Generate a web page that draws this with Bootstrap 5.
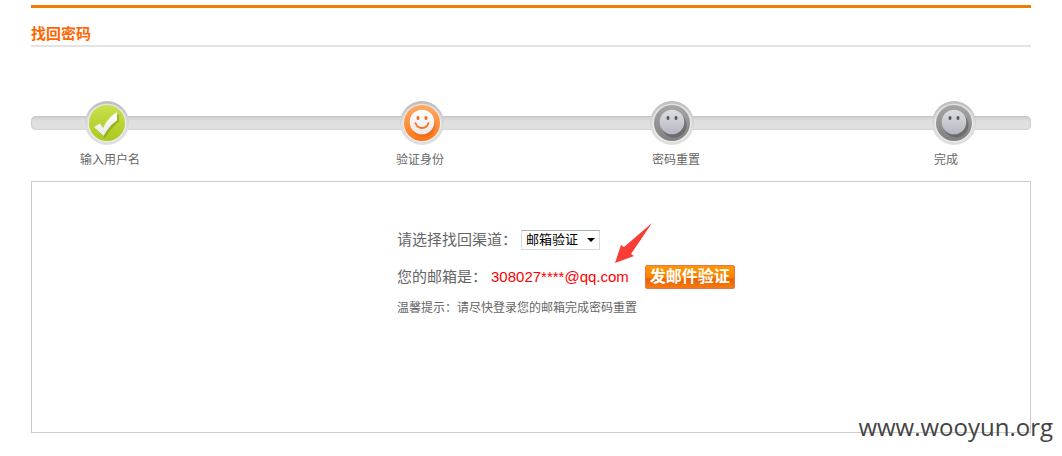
<!DOCTYPE html>
<html lang="zh-CN">
<head>
<meta charset="utf-8">
<meta name="viewport" content="width=device-width, initial-scale=1">
<title>找回密码</title>
<link href="https://cdn.jsdelivr.net/npm/bootstrap@5.3.0/dist/css/bootstrap.min.css" rel="stylesheet">
<style>
body { font-family: "Liberation Sans", "Noto Sans CJK SC", sans-serif; font-size: 12px; line-height: 18px; color: #666; }
.page { padding: 5px 31px 23px; }
.page-head { border-top: 3px solid #ee7c00; border-bottom: 2px solid #e4e4e4; padding: 17px 0 2px; }
.page-head h1 { font-size: 15px; line-height: 18px; color: #f60; }
.steps { margin-top: 54px; }
.track { display: grid; align-items: center; grid-template-columns: 54fr 44px 271fr 44px 206fr 44px 238fr 44px 55fr; }
.rail { grid-column: 1 / -1; grid-row: 1; height: 14px; border-radius: 5px; background: linear-gradient(#c2c2c2, #d4d4d4 2px, #e0e0e0 5px, #e0e0e0 12px, #d8d8d8); box-shadow: inset 1px 0 1px #ccc, inset -1px 0 1px #ccc; }
.track svg { grid-row: 1; display: block; width: 44px; height: 44px; }
.track svg:nth-of-type(1) { grid-column: 2; }
.track svg:nth-of-type(2) { grid-column: 4; }
.track svg:nth-of-type(3) { grid-column: 6; }
.track svg:nth-of-type(4) { grid-column: 8; }
.step-names { display: grid; grid-template-columns: 49fr auto 256fr auto 208fr auto 234fr auto 73fr; margin-top: 6px; }
.step-names li:nth-child(1) { grid-column: 2; }
.step-names li:nth-child(2) { grid-column: 4; }
.step-names li:nth-child(3) { grid-column: 6; }
.step-names li:nth-child(4) { grid-column: 8; }
.panel { border: 1px solid #ccc; min-height: 252px; margin-top: 12px; padding: 48px 16px 16px 36.5%; }
.line { font-size: 15px; line-height: 20px; }
.channel { appearance: none; width: 79px; height: 20px; padding: 0 4px; border: 1px solid #d5dae2; border-top-color: #abadb3; border-radius: 0; color: #000; font-size: 13px; line-height: 18px; background: #fff url("data:image/svg+xml,%3Csvg xmlns='http://www.w3.org/2000/svg' width='8' height='4'%3E%3Cpath d='M0 0h8L4 4z'/%3E%3C/svg%3E") no-repeat right 4px center; }
.mail-line { margin-top: 15px; }
.mail { color: #f00; }
.send { width: 90px; height: 24px; padding: 0; border: 1px solid #e0774e; border-radius: 2px; color: #fff; font-size: 16px; font-weight: 700; line-height: 20px; background: linear-gradient(#ff9700, #f98200 54%, #e86200 58%, #f47a10); }
.hint { margin: 10px 0 0; }
.pointer { position: absolute; left: 100%; bottom: 100%; width: 38px; height: 42px; margin: 0 0 3px -14px; }
.watermark { position: absolute; right: 9px; top: 409px; font-family: "Open Sans", sans-serif; font-size: 24px; line-height: 36px; color: #444; }
</style>
</head>
<body>
<main class="page position-relative">
  <header class="page-head"><h1 class="fw-bold m-0">找回密码</h1></header>

  <section class="steps">
    <div class="track">
      <div class="rail"></div>
      <svg viewBox="0 0 44 44" aria-hidden="true">
        <defs>
          <linearGradient id="ring" x2="0" y2="1"><stop stop-color="#bcbcbc"/><stop offset=".5" stop-color="#d6d6d6"/><stop offset="1" stop-color="#e6e6e6"/></linearGradient>
          <linearGradient id="green" x2="0" y2="1"><stop stop-color="#cae04c"/><stop offset="1" stop-color="#aac91e"/></linearGradient>
          <linearGradient id="orange" x2="0" y2="1"><stop stop-color="#ffab66"/><stop offset="1" stop-color="#ff7416"/></linearGradient>
          <linearGradient id="gray" x2="0" y2="1"><stop stop-color="#a6a6a6"/><stop offset="1" stop-color="#808080"/></linearGradient>
          <linearGradient id="silver" x2="0" y2="1"><stop stop-color="#dcdee2"/><stop offset="1" stop-color="#b5b8c0"/></linearGradient>
          <linearGradient id="white" x2="0" y2="1"><stop stop-color="#fff"/><stop offset="1" stop-color="#e9e9e9"/></linearGradient>
          <g id="socket"><circle cx="22" cy="22" r="22" fill="url(#ring)"/><circle cx="22" cy="23" r="20.500" fill="#dedede"/><circle cx="22" cy="22.500" r="19" fill="#ececec"/></g>
          <g id="waiting">
            <use href="#socket"/>
            <circle cx="22" cy="22" r="18" fill="url(#gray)"/>
            <circle cx="24" cy="24" r="12.500" fill="#555" opacity=".55"/>
            <circle cx="22" cy="21" r="12.300" fill="url(#silver)"/>
            <ellipse cx="18" cy="17" rx="1.500" ry="2" fill="#555"/><ellipse cx="26" cy="17" rx="1.500" ry="2" fill="#555"/>
          </g>
        </defs>
        <use href="#socket"/>
        <circle cx="22" cy="22" r="18" fill="url(#green)"/>
        <path d="M11 28l5-3 3 4C23 21 28 16 34 13v8c-6 4-9 9-14 16z" fill="#769611" opacity=".5"/>
        <path d="M9 26l6-3.500 3 4.500C22 19 27 14 32 11v8.500c-6 3.500-9 8.500-13.500 15.500z" fill="url(#white)"/>
      </svg>
      <svg viewBox="0 0 44 44" aria-hidden="true">
        <use href="#socket"/>
        <circle cx="22" cy="22" r="18" fill="url(#orange)"/>
        <circle cx="23.500" cy="24" r="12" fill="#d95a08" opacity=".45"/>
        <circle cx="22" cy="21" r="12.300" fill="url(#white)"/>
        <ellipse cx="18" cy="17" rx="1.500" ry="2" fill="#e96b1c"/><ellipse cx="26" cy="17" rx="1.500" ry="2" fill="#e96b1c"/>
        <path d="M15.500 22q1.500 5 6.500 5t6.500-5" fill="none" stroke="#f47421" stroke-width="1.800" stroke-linecap="round"/>
      </svg>
      <svg viewBox="0 0 44 44" aria-hidden="true"><use href="#waiting"/></svg>
      <svg viewBox="0 0 44 44" aria-hidden="true"><use href="#waiting"/></svg>
    </div>
    <ol class="step-names list-unstyled mb-0">
      <li>输入用户名</li>
      <li>验证身份</li>
      <li>密码重置</li>
      <li>完成</li>
    </ol>
  </section>

  <form class="panel">
    <div class="line d-flex align-items-center">
      <label for="channel">请选择找回渠道：</label>
      <select id="channel" class="channel ms-1"><option>邮箱验证</option></select>
    </div>
    <div class="line mail-line d-flex align-items-center">
      <span>您的邮箱是：</span>
      <span class="mail ms-1 position-relative">308027****@qq.com
        <svg class="pointer" viewBox="0 0 38 42" aria-hidden="true"><path d="M37 1L16 32l3 2L0 41 6 23l3 2z" fill="#fa3c37"/></svg>
      </span>
      <button type="button" class="send ms-3">发邮件验证</button>
    </div>
    <p class="hint">温馨提示：请尽快登录您的邮箱完成密码重置</p>
  </form>
  <div class="watermark">www.wooyun.org</div>
</main>
<script src="https://cdn.jsdelivr.net/npm/bootstrap@5.3.0/dist/js/bootstrap.bundle.min.js"></script>
</body>
</html>
